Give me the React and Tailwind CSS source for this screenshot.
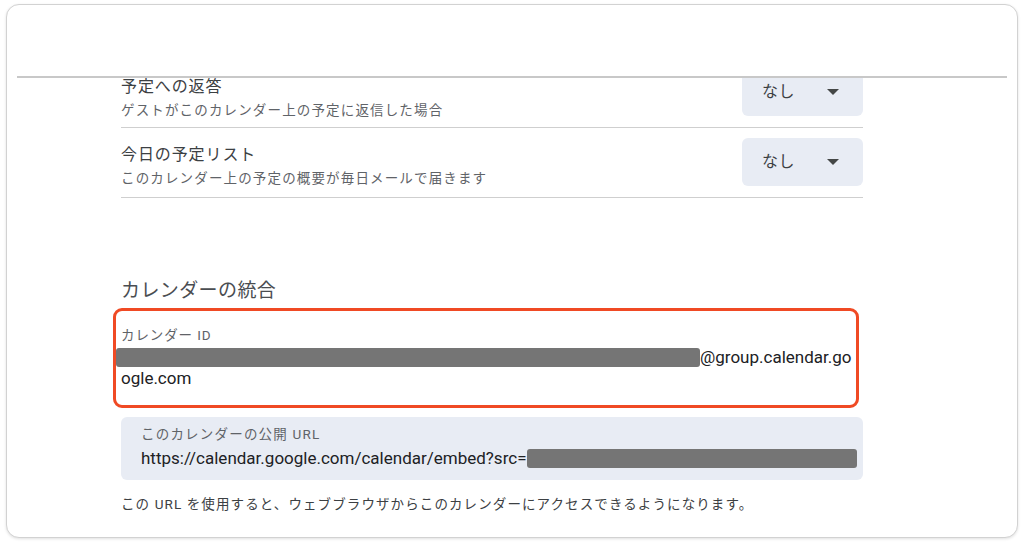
export default function App() {

  const font = { fontFamily: "Roboto, 'Noto Sans CJK JP', sans-serif" }

  return <>

  <div className="w-[1024px] h-[546px] bg-white pt-[4px] px-[6px]" style={font}>

    <div className="h-[534px] rounded-[13px] border border-[#d2d2d2] shadow-[0_1px_3px_rgba(0,0,0,0.12)] bg-white flex flex-col overflow-hidden">

      {/* header */}
      <div className="h-[71px] shrink-0"></div>
      <div className="mx-[10px] h-[2px] bg-[#c8c8c8] shrink-0"></div>

      {/* scrolled content */}
      <div className="flex-1 overflow-hidden pl-[114px] pr-[154px]">
        <div className="-mt-[20px]">

          <SettingRow first title="予定への返答" sub="ゲストがこのカレンダー上の予定に返信した場合" />
          <SettingRow title="今日の予定リスト" sub="このカレンダー上の予定の概要が毎日メールで届きます" />

          <h2 className="mt-[79px] text-[19px] leading-[28px] text-[#4a4d51] tracking-[0.4px]">
            カレンダーの統合
          </h2>

          {/* calendar id */}
          <div className="relative mt-[3px] pt-[17px] pb-[19px]">
            <div className="text-[13.5px] leading-[20px] tracking-[0.9px] text-[#5f6368]">
              カレンダー ID
            </div>
            <div className="mt-[2px] text-[17px] leading-[21px] text-[#202124]">
              <span className="inline-block align-[-4px] -ml-[5px] w-[584px] h-[19px] rounded-[3px] bg-[#757575]"></span>
              <span>@group.calendar.go</span>
              <br />
              <span>ogle.com</span>
            </div>
            <div className="absolute -left-[8px] right-[4px] top-0 bottom-0 border-[3px] border-[#f04a24] rounded-[9px] pointer-events-none"></div>
          </div>

          {/* public url */}
          <div className="mt-[9px] rounded-[6px] bg-[#e8ecf4] pl-[20px] pr-[6px] pt-[7px] pb-[11px]">
            <div className="text-[13.5px] leading-[20px] tracking-[1.2px] text-[#5f6368]">
              このカレンダーの公開 URL
            </div>
            <div className="mt-[3px] flex items-center text-[17px] leading-[22px] text-[#202124] whitespace-nowrap">
              <span>https://calendar.google.com/calendar/embed?src=</span>
              <span className="ml-[1px] w-[331px] h-[19px] rounded-[3px] bg-[#757575]"></span>
            </div>
          </div>

          <p className="mt-[14px] text-[13.5px] leading-[20px] tracking-[1.1px] text-[#3c4043]">
            この URL を使用すると、ウェブブラウザからこのカレンダーにアクセスできるようになります。
          </p>

        </div>
      </div>

    </div>

  </div>

  </>

}

function SettingRow({ title, sub, first }) {
  return (
    <div className="h-[70px] flex items-start justify-between pt-[10px] border-b border-[#cfcfcf]">
      <div className={first ? "pt-[7px]" : "pt-[5px]"}>
        <div className="text-[16px] leading-[24px] tracking-[0.9px] text-[#3c4043]">{title}</div>
        <div className="mt-[1px] text-[13.5px] leading-[20px] tracking-[1.15px] text-[#5f6368]">{sub}</div>
      </div>
      <button className="w-[121px] h-[48px] shrink-0 rounded-[6px] bg-[#e8ecf4] flex items-center justify-between pl-[20px] pr-[24px] text-[#3c4043]">
        <span className="text-[16px] tracking-[0.5px]">なし</span>
        <svg width="12" height="6" viewBox="0 0 12 6">
          <path d="M0 0 L12 0 L6 6 Z" fill="#444746" />
        </svg>
      </button>
    </div>
  )
}
